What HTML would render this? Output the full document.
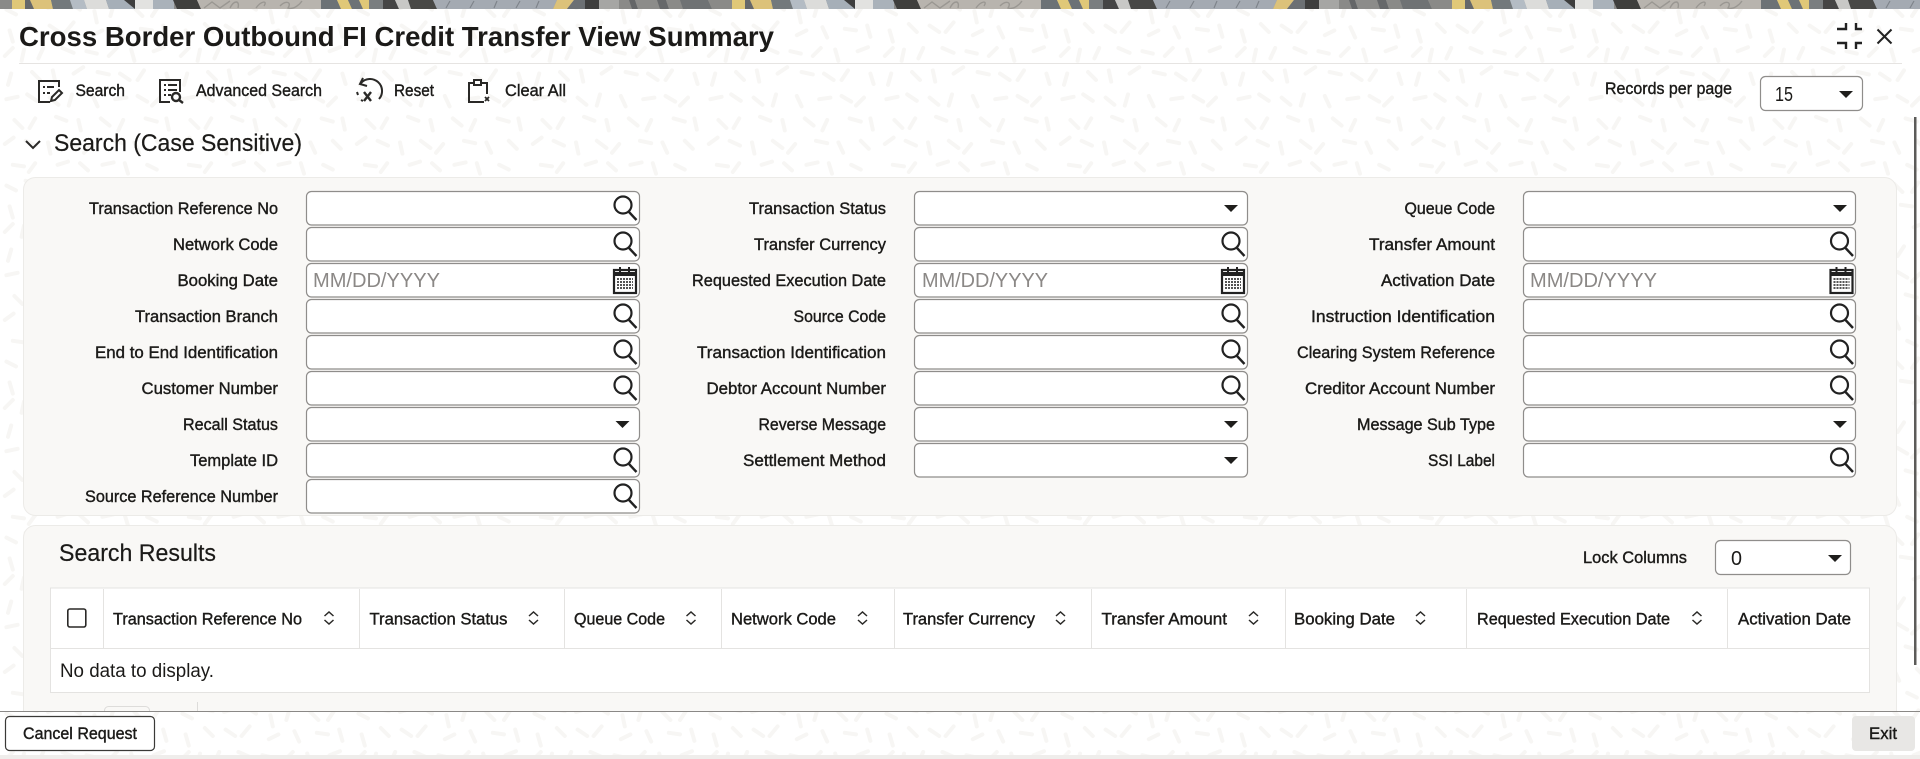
<!DOCTYPE html>
<html><head><meta charset="utf-8"><title>Cross Border Outbound FI Credit Transfer View Summary</title>
<style>
html,body{margin:0;padding:0;background:#fff;width:1920px;height:759px;overflow:hidden}
svg{display:block}
text{font-family:"Liberation Sans",sans-serif;fill:#1b1a18}
.l{font-size:17px;stroke:#1b1a18;stroke-width:.4}
.r{font-size:20px;stroke:none}
.ph{font-size:20px;fill:#8b8886}
.h{font-size:24px;stroke:#1b1a18;stroke-width:.2}
.ib{fill:#fff;stroke:#8f8d8b;stroke-width:1.2}
.ic{fill:none;stroke:#2a2927;stroke-width:2}
</style></head><body>
<svg xmlns="http://www.w3.org/2000/svg" width="1920" height="759" viewBox="0 0 1920 759">
<defs>
<pattern id="bg" width="220" height="220" patternUnits="userSpaceOnUse" patternTransform="scale(.8)">
<path fill="none" stroke="#f7f6f4" stroke-width="5" stroke-linecap="round" d="M8 12l12 6M32 6l14 3M60 10l13-4M88 4l12 8M118 14l3 14M142 6l-4 14M168 10l10 10M198 8l-8 12M12 38l4 14M36 30l10 10M62 32l12 8M92 28l-10 12M116 44l12-6M148 34l6 13M176 36l14 2M204 32l4 14M6 70l10-10M30 62l-3 14M54 60l-6 13M78 60l14 6M108 64l13 3M136 70l10-10M164 62l4 14M192 64l13-5M14 92l-4 14M40 90l10 10M66 88l3 14M92 92l12-8M122 90l14 3M150 92l12 8M180 88l-8 12M208 92l4 13M8 124l14-3M34 118l12 8M62 122l11 9M90 118l-4 14M116 120l6 13M144 124l14-2M172 120l12 7M200 122l-10 10M18 150l10 10M44 148l-7 12M70 146l13 5M98 150l3 13M126 148l11 9M154 150l-6 13M182 148l14 4M208 148l3 14M6 180l11-8M32 176l13 6M60 178l3 14M86 176l12 9M114 180l-9 11M140 176l14 3M168 178l6 13M196 176l10 10M16 206l14 2M44 204l-8 11M72 206l13-4M100 204l10 9M128 206l14-3M156 204l4 13M184 206l12 6"/>
</pattern>
<pattern id="band" width="720" height="9" patternUnits="userSpaceOnUse">
<rect width="720" height="9" fill="#8a8a88"/>
<path fill="#e0c878" d="M12 0h13v9H12z"/>
<path fill="#66686a" d="M25 0h6l4 9h-10z"/>
<path fill="#dcc27a" d="M30 0h21l2 9H34z"/>
<path fill="#73797c" d="M51 0h19l3 9H53z"/>
<path fill="#b4bcc4" d="M70 0h14l3 9H73z"/>
<path fill="#dcdcda" d="M84 0h22l3 9H87z"/>
<path fill="#a6afb8" d="M106 0h29v9h-26z"/>
<path fill="#3e3e3e" d="M124 0h11v9z"/>
<path fill="#e2e2e0" d="M135 0h18v9h-18z"/>
<path fill="#aab2ba" d="M153 0h21v9h-21z"/>
<path fill="#3f3f3d" d="M173 0h24l4 9h-24z"/>
<path fill="#b8b4ae" d="M197 0h124v9H201z"/>
<path fill="none" stroke="#9a9792" stroke-width="1.4" d="M204 8l8-6 8 6 10-7M230 8c4-8 10-8 8 0M256 8c5-7 12-8 8-2M280 6c6-6 12-4 8 2 6 2 12-4 14-7"/>
<path fill="#6c7276" d="M321 0h16l4 9h-20z"/>
<path fill="#e0c878" d="M337 0h11l4 9h-11z"/>
<path fill="#6c7276" d="M348 0h11l4 9h-11z"/>
<path fill="#e0c878" d="M359 0h10v9h-6z"/>
<path fill="#7a7e80" d="M369 0h14v9h-14z"/>
<path fill="#454545" d="M383 0h12l4 9h-16z"/>
<path fill="#c8c8c6" d="M395 0h13l3 9h-12z"/>
<path fill="#484846" d="M408 0h25l4 9h-26z"/>
<path fill="#a4aab2" d="M433 0h124l-4 9H437z"/>
<path fill="none" stroke="#7f848b" stroke-width="1.2" d="M446 8l4-7M470 8l4-7M494 8l3-7M516 8l4-7M536 8l3-7"/>
<path fill="#dcc27a" d="M557 0h17l-7 9h-14z"/>
<path fill="#6c7074" d="M574 0h11v9h-18z"/>
<path fill="#3e3e3e" d="M585 0h14v9h-14z"/>
<path fill="#a6a6a4" d="M599 0h20v9h-20z"/>
<path fill="#8a8a88" d="M619 0h10l3 9h-13z"/>
<path fill="#646668" d="M629 0h6l3 9h-6z"/>
<path fill="#8c8c8a" d="M635 0h22l3 9h-22z"/>
<path fill="#66686a" d="M657 0h9l3 9h-9z"/>
<path fill="#8a8a88" d="M666 0h14l3 9h-14z"/>
<path fill="#6f7274" d="M680 0h28l4 9h-29z"/>
<path fill="#8a8a88" d="M708 0h12v9h-8z"/>
</pattern>
<g id="sr"><circle cx="-16.5" cy="14" r="8.5" fill="none" stroke="#222" stroke-width="2.2"/><path d="M-10.5 21L-3 29" stroke="#222" stroke-width="2.4" fill="none"/></g>
<g id="cal"><rect x="-25.5" y="7" width="22" height="23" fill="#fff" stroke="#222" stroke-width="2.2"/><path d="M-26.500 9h24v4h-24z" fill="#222"/><path d="M-19.500 4v7M-10.500 4v7" stroke="#222" stroke-width="2"/><path d="M-22.500 16h16M-22.500 19h16M-22.500 22h16M-22.500 25h16" stroke="#555" stroke-width="2" stroke-dasharray="2 1"/></g>
<path id="ar" d="M-23 14h14l-7 7z" fill="#1f1e1c"/>
<clipPath id="cp"><rect x="0" y="0" width="1920" height="711"/></clipPath>
</defs>

<rect width="1920" height="759" fill="#fff"/>
<rect width="1920" height="759" fill="url(#bg)"/>
<rect width="1920" height="9" fill="url(#band)"/>
<rect y="755" width="1920" height="4" fill="#efedeb"/>

<text x="19" y="46" font-size="28" font-weight="700" textLength="755" lengthAdjust="spacingAndGlyphs">Cross Border Outbound FI Credit Transfer View Summary</text>
<path d="M19 63.5H1902" stroke="#e6e4e2" stroke-width="1"/>

<!-- window icons -->
<path fill="none" stroke="#222" stroke-width="2.4" d="M1837 29h9v-6M1862 29h-6v-6M1837 43h9v6M1862 43h-6v6"/>
<path fill="none" stroke="#222" stroke-width="2" d="M1877.5 29.5l14 14M1891.5 29.5l-14 14"/>

<!-- toolbar -->
<g class="ic">
<path d="M59 87V81H39V102H50M43 87h2M47 87h7M43 93h2M47 93h3"/>
<path d="M52 97l7-7 3 3-7 7-4 1z"/>
<path d="M180 92V80H160V102H170M164 85h2M168 85h9M164 90h2M168 90h9M164 95h2M168 95h3"/>
<circle cx="176" cy="97" r="4" stroke-width="2.4"/><path d="M179 100l4 3" stroke-width="2.4"/>
<path d="M361 83A12 12 0 1 1 379 99M363 78l-3 6 7 2M357 92l1 3M361 100l2 1"/>
<path d="M364 92l7 9M371 92l-7 9" stroke-width="2.4"/>
<path d="M474 83H469V102H484M487 94V83H481"/>
<rect x="474" y="80" width="7" height="5"/>
<path d="M485 97l4 4M489 97l-4 4" stroke-width="1.8"/>
<path d="M26 141l7 7 7-7" stroke-width="2"/>
</g>
<text class="l" x="75.5" y="96" textLength="49.5" lengthAdjust="spacingAndGlyphs">Search</text>
<text class="l" x="196" y="96" textLength="126" lengthAdjust="spacingAndGlyphs">Advanced Search</text>
<text class="l" x="394" y="96" textLength="40" lengthAdjust="spacingAndGlyphs">Reset</text>
<text class="l" x="505" y="96" textLength="61" lengthAdjust="spacingAndGlyphs">Clear All</text>
<text class="l" x="1605" y="94" textLength="127" lengthAdjust="spacingAndGlyphs">Records per page</text>
<rect class="ib" x="1760.5" y="76.5" width="102" height="34" rx="5"/>
<text class="r" x="1775" y="101" textLength="18" lengthAdjust="spacingAndGlyphs">15</text>
<use href="#ar" transform="translate(1862,77)"/>
<text class="h" x="54" y="151" textLength="248" lengthAdjust="spacingAndGlyphs">Search (Case Sensitive)</text>

<!-- scrollbar -->
<rect x="1914" y="117" width="2.5" height="548" fill="#5c5b59"/>

<!-- search panel -->
<rect x="23.5" y="177.5" width="1873" height="338" rx="12" fill="#f9f8f6" stroke="#ecebe8"/>

<!-- inputs col1 -->
<g>
<rect class="ib" x="306.5" y="191.5" width="333" height="33.5" rx="5"/><use href="#sr" transform="translate(639.500,191)"/>
<rect class="ib" x="306.5" y="227.5" width="333" height="33.5" rx="5"/><use href="#sr" transform="translate(639.500,227)"/>
<rect class="ib" x="306.5" y="263.5" width="333" height="33.5" rx="5"/><use href="#cal" transform="translate(639.500,263)"/>
<rect class="ib" x="306.5" y="299.5" width="333" height="33.5" rx="5"/><use href="#sr" transform="translate(639.500,299)"/>
<rect class="ib" x="306.5" y="335.5" width="333" height="33.5" rx="5"/><use href="#sr" transform="translate(639.500,335)"/>
<rect class="ib" x="306.5" y="371.5" width="333" height="33.5" rx="5"/><use href="#sr" transform="translate(639.500,371)"/>
<rect class="ib" x="306.5" y="407.5" width="333" height="33.5" rx="5"/><use href="#ar" transform="translate(638.500,407)"/>
<rect class="ib" x="306.5" y="443.5" width="333" height="33.5" rx="5"/><use href="#sr" transform="translate(639.500,443)"/>
<rect class="ib" x="306.5" y="479.5" width="333" height="33.5" rx="5"/><use href="#sr" transform="translate(639.500,479)"/>
</g>
<!-- inputs col2 -->
<g>
<rect class="ib" x="914.5" y="191.5" width="333" height="33.5" rx="5"/><use href="#ar" transform="translate(1247,191)"/>
<rect class="ib" x="914.5" y="227.5" width="333" height="33.5" rx="5"/><use href="#sr" transform="translate(1247.500,227)"/>
<rect class="ib" x="914.5" y="263.5" width="333" height="33.5" rx="5"/><use href="#cal" transform="translate(1247.500,263)"/>
<rect class="ib" x="914.5" y="299.5" width="333" height="33.5" rx="5"/><use href="#sr" transform="translate(1247.500,299)"/>
<rect class="ib" x="914.5" y="335.5" width="333" height="33.5" rx="5"/><use href="#sr" transform="translate(1247.500,335)"/>
<rect class="ib" x="914.5" y="371.5" width="333" height="33.5" rx="5"/><use href="#sr" transform="translate(1247.500,371)"/>
<rect class="ib" x="914.5" y="407.5" width="333" height="33.5" rx="5"/><use href="#ar" transform="translate(1247,407)"/>
<rect class="ib" x="914.5" y="443.5" width="333" height="33.5" rx="5"/><use href="#ar" transform="translate(1247,443)"/>
</g>
<!-- inputs col3 -->
<g>
<rect class="ib" x="1523.5" y="191.5" width="332" height="33.5" rx="5"/><use href="#ar" transform="translate(1856,191)"/>
<rect class="ib" x="1523.5" y="227.5" width="332" height="33.5" rx="5"/><use href="#sr" transform="translate(1856,227)"/>
<rect class="ib" x="1523.5" y="263.5" width="332" height="33.5" rx="5"/><use href="#cal" transform="translate(1856,263)"/>
<rect class="ib" x="1523.5" y="299.5" width="332" height="33.5" rx="5"/><use href="#sr" transform="translate(1856,299)"/>
<rect class="ib" x="1523.5" y="335.5" width="332" height="33.5" rx="5"/><use href="#sr" transform="translate(1856,335)"/>
<rect class="ib" x="1523.5" y="371.5" width="332" height="33.5" rx="5"/><use href="#sr" transform="translate(1856,371)"/>
<rect class="ib" x="1523.5" y="407.5" width="332" height="33.5" rx="5"/><use href="#ar" transform="translate(1856,407)"/>
<rect class="ib" x="1523.5" y="443.5" width="332" height="33.5" rx="5"/><use href="#sr" transform="translate(1856,443)"/>
</g>
<text class="ph" x="313" y="287" textLength="127" lengthAdjust="spacingAndGlyphs">MM/DD/YYYY</text>
<text class="ph" x="922" y="287" textLength="126" lengthAdjust="spacingAndGlyphs">MM/DD/YYYY</text>
<text class="ph" x="1530" y="287" textLength="127" lengthAdjust="spacingAndGlyphs">MM/DD/YYYY</text>

<g transform="translate(0,-.8)">
<!-- labels col1 -->
<text class="l" x="89" y="215" textLength="189" lengthAdjust="spacingAndGlyphs">Transaction Reference No</text>
<text class="l" x="173" y="251" textLength="105" lengthAdjust="spacingAndGlyphs">Network Code</text>
<text class="l" x="177.5" y="287" textLength="100.5" lengthAdjust="spacingAndGlyphs">Booking Date</text>
<text class="l" x="135" y="323" textLength="143" lengthAdjust="spacingAndGlyphs">Transaction Branch</text>
<text class="l" x="95" y="359" textLength="183" lengthAdjust="spacingAndGlyphs">End to End Identification</text>
<text class="l" x="141.5" y="395" textLength="136.5" lengthAdjust="spacingAndGlyphs">Customer Number</text>
<text class="l" x="183" y="431" textLength="95" lengthAdjust="spacingAndGlyphs">Recall Status</text>
<text class="l" x="190" y="467" textLength="88" lengthAdjust="spacingAndGlyphs">Template ID</text>
<text class="l" x="85" y="503" textLength="193" lengthAdjust="spacingAndGlyphs">Source Reference Number</text>
<!-- labels col2 -->
<text class="l" x="749" y="215" textLength="137" lengthAdjust="spacingAndGlyphs">Transaction Status</text>
<text class="l" x="754" y="251" textLength="132" lengthAdjust="spacingAndGlyphs">Transfer Currency</text>
<text class="l" x="692" y="287" textLength="194" lengthAdjust="spacingAndGlyphs">Requested Execution Date</text>
<text class="l" x="793.5" y="323" textLength="92.5" lengthAdjust="spacingAndGlyphs">Source Code</text>
<text class="l" x="697" y="359" textLength="189" lengthAdjust="spacingAndGlyphs">Transaction Identification</text>
<text class="l" x="706.5" y="395" textLength="179.5" lengthAdjust="spacingAndGlyphs">Debtor Account Number</text>
<text class="l" x="758.5" y="431" textLength="127.5" lengthAdjust="spacingAndGlyphs">Reverse Message</text>
<text class="l" x="743" y="467" textLength="143" lengthAdjust="spacingAndGlyphs">Settlement Method</text>
<!-- labels col3 -->
<text class="l" x="1404.5" y="215" textLength="90.5" lengthAdjust="spacingAndGlyphs">Queue Code</text>
<text class="l" x="1369" y="251" textLength="126" lengthAdjust="spacingAndGlyphs">Transfer Amount</text>
<text class="l" x="1381" y="287" textLength="114" lengthAdjust="spacingAndGlyphs">Activation Date</text>
<text class="l" x="1311" y="323" textLength="184" lengthAdjust="spacingAndGlyphs">Instruction Identification</text>
<text class="l" x="1297" y="359" textLength="198" lengthAdjust="spacingAndGlyphs">Clearing System Reference</text>
<text class="l" x="1305" y="395" textLength="190" lengthAdjust="spacingAndGlyphs">Creditor Account Number</text>
<text class="l" x="1357" y="431" textLength="138" lengthAdjust="spacingAndGlyphs">Message Sub Type</text>
<text class="l" x="1428" y="467" textLength="67" lengthAdjust="spacingAndGlyphs">SSI Label</text>
</g>

<!-- results panel -->
<g clip-path="url(#cp)">
<rect x="23.5" y="525.5" width="1873" height="220" rx="12" fill="#f9f8f6" stroke="#ecebe8"/>
<rect x="104.5" y="706.5" width="45" height="20" rx="4" fill="none" stroke="#dddcda"/>
<path d="M197.5 702V711" stroke="#dddcda"/>
</g>
<text class="h" x="59" y="561" textLength="157" lengthAdjust="spacingAndGlyphs">Search Results</text>
<text class="l" x="1583" y="563" textLength="104" lengthAdjust="spacingAndGlyphs">Lock Columns</text>
<rect class="ib" x="1715.5" y="540.5" width="135" height="34" rx="5"/>
<text class="r" x="1731" y="565" textLength="11" lengthAdjust="spacingAndGlyphs">0</text>
<use href="#ar" transform="translate(1851,541)"/>

<!-- table -->
<rect x="50.5" y="588" width="1819" height="104.5" fill="#fff" stroke="#e4e3e1"/>
<path d="M51 648.5H1869M103.5 589V648M359.5 589V648M564.5 589V648M721.5 589V648M894.5 589V648M1091.5 589V648M1285.5 589V648M1466.5 589V648M1727.5 589V648" stroke="#e4e3e1" fill="none"/>
<rect x="67.8" y="609" width="18" height="18" rx="2" fill="#fff" stroke="#2a2927" stroke-width="1.6"/>
<text class="l" x="113" y="624.5" textLength="189" lengthAdjust="spacingAndGlyphs">Transaction Reference No</text>
<text class="l" x="369.5" y="624.5" textLength="138" lengthAdjust="spacingAndGlyphs">Transaction Status</text>
<text class="l" x="574" y="624.5" textLength="91" lengthAdjust="spacingAndGlyphs">Queue Code</text>
<text class="l" x="731" y="624.5" textLength="105" lengthAdjust="spacingAndGlyphs">Network Code</text>
<text class="l" x="903" y="624.5" textLength="132" lengthAdjust="spacingAndGlyphs">Transfer Currency</text>
<text class="l" x="1101.5" y="624.5" textLength="125.5" lengthAdjust="spacingAndGlyphs">Transfer Amount</text>
<text class="l" x="1294" y="624.5" textLength="101" lengthAdjust="spacingAndGlyphs">Booking Date</text>
<text class="l" x="1477" y="624.5" textLength="193" lengthAdjust="spacingAndGlyphs">Requested Execution Date</text>
<text class="l" x="1738" y="624.5" textLength="113" lengthAdjust="spacingAndGlyphs">Activation Date</text>
<path fill="none" stroke="#2a2927" stroke-width="1.5" d="M324.5 616l4.5-4 4.500 4M324.5 620l4.5 4 4.5-4M529 616l4.5-4 4.5 4M529 620l4.5 4 4.5-4M686.5 616l4.5-4 4.5 4M686.5 620l4.5 4 4.5-4M858 616l4.5-4 4.5 4M858 620l4.5 4 4.5-4M1056 616l4.5-4 4.5 4M1056 620l4.5 4 4.5-4M1249 616l4.5-4 4.5 4M1249 620l4.5 4 4.5-4M1416 616l4.5-4 4.5 4M1416 620l4.5 4 4.5-4M1692.5 616l4.5-4 4.5 4M1692.5 620l4.5 4 4.5-4"/>
<text x="60" y="677" font-size="19" textLength="154" lengthAdjust="spacingAndGlyphs">No data to display.</text>

<!-- footer -->
<path d="M0 711.5H1920" stroke="#8a8886" stroke-width="1"/>
<rect x="5.5" y="716.5" width="149" height="34" rx="4" fill="#fff" stroke="#3a3937" stroke-width="1.2"/>
<text class="l" x="23" y="739" textLength="114" lengthAdjust="spacingAndGlyphs">Cancel Request</text>
<rect x="1852" y="716" width="63" height="35" rx="4" fill="#e8e7e5"/>
<text class="l" x="1869" y="739" textLength="28" lengthAdjust="spacingAndGlyphs">Exit</text>
</svg>
</body></html>
